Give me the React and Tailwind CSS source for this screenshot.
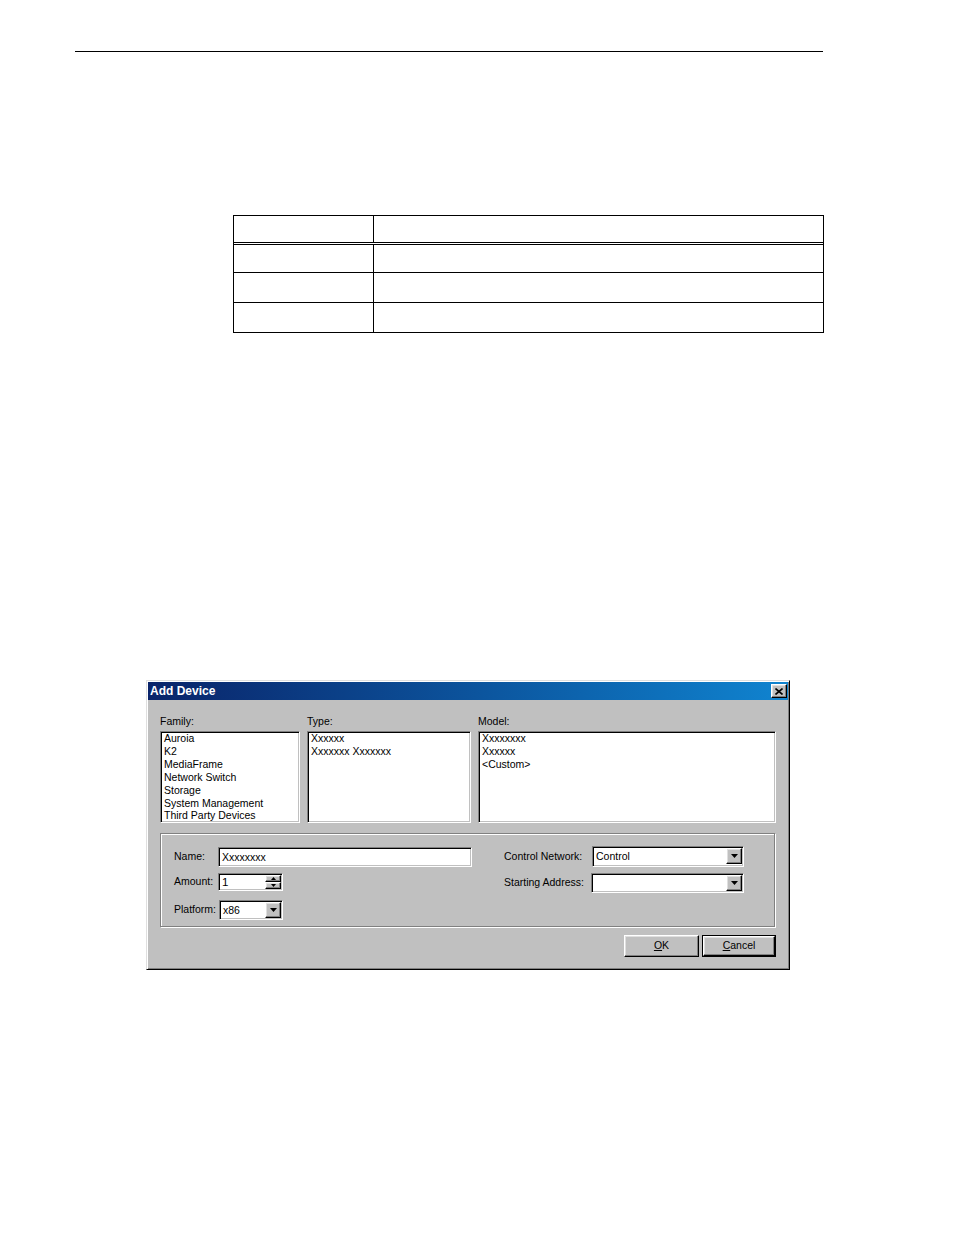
import React from "react";

const sunken =
  "bg-white border border-t-[#808080] border-l-[#808080] border-b-white border-r-white shadow-[inset_1px_1px_0_#000,inset_-1px_-1px_0_#c0c0c0]";
const raised =
  "bg-[#c0c0c0] border border-t-white border-l-white border-b-black border-r-black shadow-[inset_-1px_-1px_0_#808080,inset_1px_1px_0_#dfdfdf]";

function DownArrow({ w = 7, h = 4 }) {
  return (
    <svg width={w} height={h} viewBox={`0 0 ${w} ${h}`}>
      <polygon points={`0,0 ${w},0 ${w / 2},${h}`} fill="#000" />
    </svg>
  );
}

function UpArrow({ w = 5, h = 3 }) {
  return (
    <svg width={w} height={h} viewBox={`0 0 ${w} ${h}`}>
      <polygon points={`0,${h} ${w},${h} ${w / 2},0`} fill="#000" />
    </svg>
  );
}

function Combo({ value, className }) {
  return (
    <div className={`flex p-px h-[20px] ${sunken} ${className}`}>
      <div className="flex-1 pl-[2px] leading-[16px]">{value}</div>
      <div className={`w-[16px] h-[16px] flex items-center justify-center ${raised}`}>
        <DownArrow />
      </div>
    </div>
  );
}

function ListBox({ items, className }) {
  return (
    <div className={`h-[92px] p-px overflow-hidden ${sunken} ${className}`}>
      <div className="pl-[2px] leading-[12.9px] -mt-px">
        {items.map((it) => (
          <div key={it} className="whitespace-nowrap">{it}</div>
        ))}
      </div>
    </div>
  );
}

function TableRow({ className }) {
  return (
    <div className={`flex ${className}`}>
      <div className="w-[140px] border-r border-black" />
      <div className="flex-1" />
    </div>
  );
}

export default function App() {
  return (
    <div className="w-[954px] h-[1235px] bg-white pt-[51px] text-black font-['Liberation_Sans',Arial,sans-serif]">
      <div className="ml-[75px] w-[748px] h-px bg-black" />

      <div className="ml-[233px] mt-[163px] w-[591px] border border-black">
        <TableRow className="h-[29px] border-b-[3px] border-double border-black" />
        <TableRow className="h-[27px]" />
        <TableRow className="h-[30px] border-t border-black" />
        <TableRow className="h-[30px] border-t border-black" />
      </div>

      <div className="ml-[146px] mt-[347px] w-[644px] h-[290px] p-px bg-[#c0c0c0] border border-t-[#dfdfdf] border-l-[#dfdfdf] border-b-black border-r-black shadow-[inset_1px_1px_0_#fff,inset_-1px_-1px_0_#808080] text-[10.5px]">
        <div className="h-[18px] flex items-center justify-between pl-[2px] pr-px bg-gradient-to-r from-[#0a246a] to-[#1084d0]">
          <span className="text-white font-bold text-[12px]">Add Device</span>
          <div className={`w-[16px] h-[14px] flex items-center justify-center ${raised}`}>
            <svg width="8" height="7" viewBox="0 0 8 7">
              <path d="M0.5 0.5 L7.5 6.5 M7.5 0.5 L0.5 6.5" stroke="#000" strokeWidth="1.6" />
            </svg>
          </div>
        </div>

        <div className="pl-[12px] pr-[12px] pt-[14px]">
          <div className="flex gap-[7px]">
            <div className="flex flex-col w-[140px]">
              <div className="h-[14px] leading-[14px] mb-[3px]">Family:</div>
              <ListBox
                items={[
                  "Auroia",
                  "K2",
                  "MediaFrame",
                  "Network Switch",
                  "Storage",
                  "System Management",
                  "Third Party Devices",
                ]}
              />
            </div>
            <div className="flex flex-col w-[164px]">
              <div className="h-[14px] leading-[14px] mb-[3px]">Type:</div>
              <ListBox items={["Xxxxxx", "Xxxxxxx Xxxxxxx"]} />
            </div>
            <div className="flex flex-col flex-1">
              <div className="h-[14px] leading-[14px] mb-[3px]">Model:</div>
              <ListBox items={["Xxxxxxxx", "Xxxxxx", "<Custom>"]} />
            </div>
          </div>

          <div className="mt-[10px] h-[94px] mr-px flex pl-[13px] pt-[13px] border border-[#808080] shadow-[inset_1px_1px_0_#fff,1px_1px_0_#fff]">
            <div className="flex flex-col w-[298px]">
              <div className="flex items-center h-[20px]">
                <span className="w-[44px]">Name:</span>
                <div className={`flex-1 h-[20px] p-px ${sunken}`}>
                  <div className="pl-[2px] leading-[16px]">Xxxxxxxx</div>
                </div>
              </div>
              <div className="flex items-center h-[18px] mt-[6px]">
                <span className="w-[44px]">Amount:</span>
                <div className={`flex w-[65px] h-[18px] p-px ${sunken}`}>
                  <div className="flex-1 pl-[2px] leading-[15px] text-[11.5px]">1</div>
                  <div className="flex flex-col w-[16px]">
                    <div className={`h-[8px] flex items-center justify-center ${raised}`}>
                      <UpArrow />
                    </div>
                    <div className={`h-[8px] flex items-center justify-center ${raised}`}>
                      <DownArrow w={5} h={3} />
                    </div>
                  </div>
                </div>
              </div>
              <div className="flex items-center h-[20px] mt-[9px]">
                <span className="w-[45px]">Platform:</span>
                <Combo value="x86" className="w-[64px]" />
              </div>
            </div>

            <div className="flex flex-col ml-[32px] -mt-px">
              <div className="flex items-center h-[21px]">
                <span className="w-[88px]">Control Network:</span>
                <Combo value="Control" className="w-[152px] h-[21px]" />
              </div>
              <div className="flex items-center h-[20px] mt-[6px]">
                <span className="w-[87px]">Starting Address:</span>
                <Combo value="" className="w-[153px]" />
              </div>
            </div>
          </div>

          <div className="mt-[8px] flex justify-end gap-[3px]">
            <div className={`w-[75px] h-[22px] flex items-center justify-center ${raised}`}>
              <span><u>O</u>K</span>
            </div>
            <div className="w-[74px] h-[22px] border border-black">
              <div className={`w-full h-full flex items-center justify-center ${raised}`}>
                <span><u>C</u>ancel</span>
              </div>
            </div>
          </div>
        </div>
      </div>
    </div>
  );
}
